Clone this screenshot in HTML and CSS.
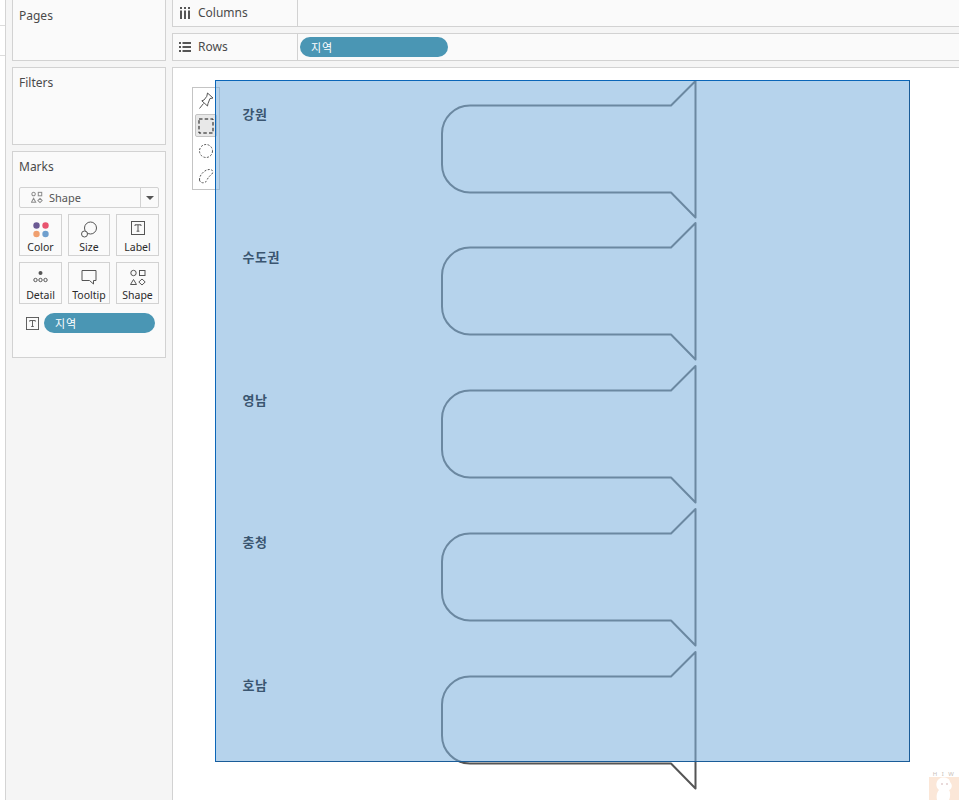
FILE: index.html
```html
<!DOCTYPE html>
<html lang="ko">
<head>
<meta charset="utf-8">
<title>Sheet</title>
<link rel="stylesheet" href="styles.css">
</head>
<body>
<svg class="defs" width="0" height="0" aria-hidden="true">
  <symbol id="flare" viewBox="0 0 256 140">
    <path d="M254.5 1 L230 25.5 H29 A28 28 0 0 0 1 53.5 V84.5 A28 28 0 0 0 29 112.5 H230 L254.5 137.5 Z" fill="none" stroke="#555" stroke-width="2" stroke-linejoin="round"/>
  </symbol>
  <symbol id="t-box" viewBox="0 0 14 14">
    <rect x=".5" y=".5" width="13" height="13" fill="none" stroke="#555"/>
    <path d="M4 5V3.8H10V5M7 3.8V10.2M5.6 10.2H8.4" fill="none" stroke="#555"/>
  </symbol>
</svg>
<div class="app">
  <div class="strip"><i></i><i></i></div>
  <aside class="side">
    <section class="panel pages"><h2>Pages</h2></section>
    <section class="panel filters"><h2>Filters</h2></section>
    <section class="panel marks">
      <h2>Marks</h2>
      <div class="select">
        <span class="select-main">
          <svg class="select-ico" width="12" height="13" viewBox="0 0 14 14"><g fill="none" stroke="#8d8d8d" stroke-width="1.200"><circle cx="3" cy="3" r="2"/><rect x="8.500" y="1" width="4" height="4"/><path d="M3 8L5.500 12.500H.5Z"/><path d="M10.500 8l2.500 2.500-2.500 2.500L8 10.500Z"/></g></svg>
          Shape
        </span>
        <span class="select-arrow"></span>
      </div>
      <div class="cards">
        <div class="card">
          <svg width="18" height="18" viewBox="0 0 18 18"><circle cx="4.500" cy="4.500" r="3.200" fill="#6b5a93"/><circle cx="13.500" cy="4.500" r="3.200" fill="#e8546f"/><circle cx="4.500" cy="13" r="3.200" fill="#f0a070"/><circle cx="13.500" cy="13" r="3.200" fill="#6f9fce"/></svg>
          <span>Color</span>
        </div>
        <div class="card">
          <svg width="18" height="18" viewBox="0 0 18 18"><g fill="none" stroke="#555"><circle cx="10.500" cy="7" r="6"/><circle cx="4.500" cy="13" r="3" fill="#fafafa"/></g></svg>
          <span>Size</span>
        </div>
        <div class="card">
          <svg width="14" height="14"><use href="#t-box"/></svg>
          <span>Label</span>
        </div>
        <div class="card">
          <svg width="16" height="18" viewBox="0 0 16 18"><circle cx="7.500" cy="4" r="2" fill="#555"/><g fill="none" stroke="#555"><circle cx="2.500" cy="11" r="1.700"/><circle cx="7.500" cy="11" r="1.700"/><circle cx="12.500" cy="11" r="1.700"/></g></svg>
          <span>Detail</span>
        </div>
        <div class="card">
          <svg width="16" height="16" viewBox="0 0 16 16"><path d="M1 1.500H15V11.500H12.500V15L8.500 11.500H1Z" fill="none" stroke="#555"/></svg>
          <span>Tooltip</span>
        </div>
        <div class="card">
          <svg width="16" height="18" viewBox="0 0 16 18"><g fill="none" stroke="#555"><circle cx="3.500" cy="4" r="2.700"/><rect x="9.500" y="1.500" width="5.500" height="5"/><path d="M3.500 10.500L6.500 15.500H.5Z"/><path d="M12 10l3.200 3-3.200 3-3.200-3Z"/></g></svg>
          <span>Shape</span>
        </div>
      </div>
      <div class="encoding">
        <svg width="13" height="13"><use href="#t-box"/></svg>
        <span class="pill pill-marks">지역</span>
      </div>
    </section>
  </aside>
  <main class="work">
    <div class="shelf shelf-columns">
      <div class="shelf-head">
        <svg width="12" height="12" viewBox="0 0 12 12"><path d="M1 0h2v2H1zM5 0h2v2H5zM9 0h2v2H9zM1 3.500h2v8.500H1zM5 3.500h2v8.500H5zM9 3.500h2v8.500H9z" fill="#555"/></svg>
        <span class="shelf-name">Columns</span>
      </div>
    </div>
    <div class="shelf shelf-rows">
      <div class="shelf-head">
        <svg width="12" height="12" viewBox="0 0 12 12"><path d="M0 1h2v2H0zM3.500 1H12v2H3.500zM0 5h2v2H0zM3.500 5H12v2H3.500zM0 9h2v2H0zM3.500 9H12v2H3.500z" fill="#555"/></svg>
        <span class="shelf-name">Rows</span>
      </div>
      <div class="shelf-body"><span class="pill pill-rows">지역</span></div>
    </div>
    <div class="canvas">
      <div class="palette">
        <div class="tool">
          <svg width="16" height="18" viewBox="0 0 16 18"><path d="M9.500 1L15 6 12 6.500 10 11.500 9.500 14 3.800 8.800 6 8 8.800 4.300Z M5.500 11.500L1.500 16.500" fill="none" stroke="#555"/></svg>
        </div>
        <div class="tool tool-on">
          <svg width="16" height="16" viewBox="0 0 16 16"><rect x="1" y="1" width="14" height="14" fill="none" stroke="#111" stroke-dasharray="3.500 2.200"/></svg>
        </div>
        <div class="tool">
          <svg width="16" height="16" viewBox="0 0 16 16"><circle cx="8" cy="8" r="6.500" fill="none" stroke="#555" stroke-dasharray="2 1.500"/></svg>
        </div>
        <div class="tool">
          <svg width="16" height="16" viewBox="0 0 16 16"><path d="M1.500 12C1 8 6 1.500 11.500 1.500 15 1.500 15.500 4 14 6 11.500 8 10 9.500 8.500 13 7 15.500 2 15.500 1.500 12Z" fill="none" stroke="#555" stroke-dasharray="2 1.500"/></svg>
        </div>
      </div>
      <div class="plot">
        <div class="row"><span class="row-label">강원</span><svg class="flare"><use href="#flare"/></svg></div>
        <div class="row"><span class="row-label">수도권</span><svg class="flare"><use href="#flare"/></svg></div>
        <div class="row"><span class="row-label">영남</span><svg class="flare"><use href="#flare"/></svg></div>
        <div class="row"><span class="row-label">충청</span><svg class="flare"><use href="#flare"/></svg></div>
        <div class="row"><span class="row-label">호남</span><svg class="flare"><use href="#flare"/></svg></div>
      </div>
      <div class="selection"></div>
      <div class="mascot">
        <span class="mascot-text">H I W</span>
        <svg width="30" height="23" viewBox="0 0 30 23"><rect width="30" height="23" fill="#fbe7d8"/><path d="M10 2C14 -1 21 1 21 5 24 8 23 12 20 13 22 16 21 21 20 23H8C7 19 8 15 10 13 6 10 7 4 10 2Z" fill="#fff"/><circle cx="13" cy="7" r=".8" fill="#caa"/><circle cx="18" cy="7" r=".8" fill="#caa"/></svg>
      </div>
    </div>
  </main>
</div>
</body>
</html>
```
FILE: styles.css
```css
* { box-sizing: border-box; }
html, body { margin: 0; height: 100%; }
body {
  background: #fff;
  font-family: "Noto Sans", "Noto Sans CJK KR", sans-serif;
  font-size: 11px;
  color: #333;
  overflow: hidden;
}
.defs { position: absolute; }
.app { display: flex; width: 959px; height: 800px; }

.strip {
  width: 6px;
  border-right: 1px solid #d4d4d4;
  padding-top: 25px;
  display: flex;
  flex-direction: column;
  gap: 29px;
}
.strip i { display: block; height: 1px; background: #dcdcdc; }

.side {
  width: 166px;
  flex: none;
  background: #f5f5f5;
  padding: 0 6px 0 6px;
  display: flex;
  flex-direction: column;
  gap: 6px;
}
.panel {
  background: #fafafa;
  border: 1px solid #d2d2d2;
  padding: 8px 6px 0;
  width: 154px;
}
.panel h2 {
  margin: 0;
  font-size: 12px;
  font-weight: 400;
  line-height: 14px;
  color: #4a4a4a;
}
.pages { height: 62px; margin-top: -1px; padding-top: 9px; }
.filters { height: 78px; }
.marks { height: 207px; }

.select {
  margin-top: 13px;
  width: 140px;
  height: 21px;
  border: 1px solid #d2d2d2;
  border-radius: 2px;
  display: flex;
  background: #fafafa;
}
.select-main {
  flex: 1;
  display: flex;
  align-items: center;
  gap: 6px;
  padding-left: 11px;
  color: #555;
  border-right: 1px solid #d2d2d2;
}
.select-ico { flex: none; }
.select-arrow { width: 17px; position: relative; }
.select-arrow::after {
  content: "";
  position: absolute;
  left: 5px;
  top: 8px;
  border: 4px solid transparent;
  border-top: 4px solid #555;
  border-bottom: 0;
}

.cards {
  margin-top: 6px;
  display: grid;
  grid-template-columns: 43px 42px 43px;
  grid-auto-rows: 42px;
  gap: 6px;
  width: 140px;
}
.card {
  border: 1px solid #d2d2d2;
  display: flex;
  flex-direction: column;
  align-items: center;
  justify-content: space-between;
  padding: 6px 0 1px;
  font-size: 10.5px;
  line-height: 13px;
  color: #2a2a2a;
  white-space: nowrap;
}

.encoding {
  margin-top: 9px;
  padding-left: 7px;
  display: flex;
  align-items: center;
  gap: 5px;
}
.pill {
  display: flex;
  align-items: center;
  height: 20px;
  border-radius: 10px;
  background: #4a96b4;
  color: #fff;
  font-size: 11px;
  padding-left: 11px;
  letter-spacing: 1px;
}
.pill-marks { width: 111px; }
.pill-rows { width: 148px; }

.work {
  flex: 1;
  min-width: 0;
  display: flex;
  flex-direction: column;
  background: #f5f5f5;
}
.shelf {
  display: flex;
  background: #fafafa;
  border-left: 1px solid #d2d2d2;
  border-bottom: 1px solid #d2d2d2;
}
.shelf-columns { height: 27px; }
.shelf-rows {
  height: 28px;
  margin-top: 6px;
  border-top: 1px solid #d2d2d2;
}
.shelf-head {
  width: 125px;
  display: flex;
  align-items: center;
  gap: 7px;
  padding-left: 6px;
  font-size: 12px;
  color: #4a4a4a;
  border-right: 1px solid #d2d2d2;
}
.shelf-name { line-height: 16px; margin-top: -1px; }
.shelf-body { flex: 1; display: flex; align-items: center; padding-left: 2px; }

.canvas {
  position: relative;
  flex: 1;
  margin-top: 6px;
  background: #fff;
  border-left: 1px solid #d2d2d2;
  border-top: 1px solid #d2d2d2;
  padding: 11.6px 0 0 42px;
}

.palette {
  position: absolute;
  left: 19px;
  top: 19px;
  width: 28px;
  height: 103px;
  background: #fff;
  border: 1px solid #c4c4c4;
  padding: 0 2px;
  display: flex;
  flex-direction: column;
}
.tool {
  height: 25px;
  display: flex;
  align-items: center;
  justify-content: center;
  flex: none;
}
.tool-on {
  background: #e8e8e8;
  border: 1px solid #c4c4c4;
  border-radius: 2px;
  margin: 1px 0;
  height: 23px;
}

.plot { position: relative; width: 695px; height: 682px; }
.row {
  display: flex;
  align-items: flex-start;
  height: 142.75px;
}
.row-label {
  position: relative;
  z-index: 1;
  width: 226px;
  flex: none;
  padding: 25.6px 0 0 27.5px;
  font-size: 13px;
  line-height: 18px;
  letter-spacing: .6px;
  font-weight: 700;
  color: #3a5570;
}
.flare { width: 256px; height: 140px; flex: none; overflow: visible; }

.selection {
  position: absolute;
  left: 42px;
  top: 12px;
  width: 695px;
  height: 682px;
  background: rgba(125, 177, 221, .56);
  border: 1px solid #0b66b8;
  border-right-color: #1a5c98;
  border-bottom-color: #1a5c98;
}

.mascot {
  position: absolute;
  right: 0;
  bottom: 0;
  width: 30px;
  display: flex;
  flex-direction: column;
  align-items: center;
}
.mascot-text {
  font-size: 6px;
  line-height: 5px;
  letter-spacing: 1.5px;
  color: #c8c0b8;
  white-space: nowrap;
}
.mascot svg { display: block; }
```
